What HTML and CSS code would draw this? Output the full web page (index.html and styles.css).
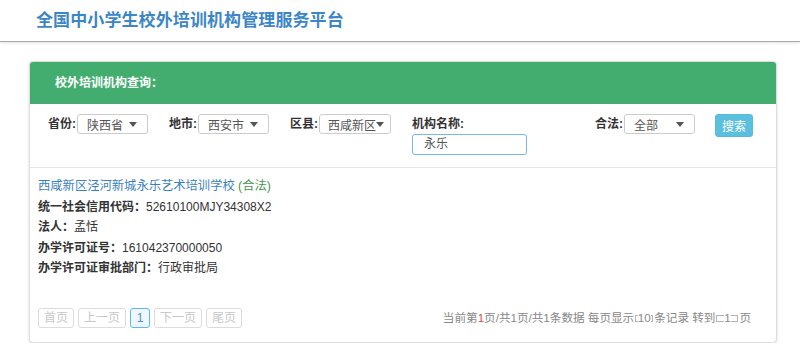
FILE: index.html
```html
<!DOCTYPE html>
<html lang="zh-CN">
<head>
<meta charset="utf-8">
<title>全国中小学生校外培训机构管理服务平台</title>
<link rel="stylesheet" href="styles.css">
</head>
<body>
<header class="topbar">
  <h1 class="site-title">全国中小学生校外培训机构管理服务平台</h1>
</header>
<main class="card">
  <div class="card-head">校外培训机构查询：</div>
  <div class="filters">
    <div class="field">
      <span class="flabel">省份:</span>
      <div class="sel"><span>陕西省</span><span class="caret"></span></div>
    </div>
    <div class="field">
      <span class="flabel">地市:</span>
      <div class="sel"><span>西安市</span><span class="caret"></span></div>
    </div>
    <div class="field">
      <span class="flabel">区县:</span>
      <div class="sel sel-tight"><span>西咸新区</span><span class="caret"></span></div>
    </div>
    <div class="field field-col">
      <span class="flabel">机构名称:</span>
      <div class="text-input">永乐</div>
    </div>
    <div class="field field-right">
      <span class="flabel">合法:</span>
      <div class="sel"><span>全部</span><span class="caret"></span></div>
    </div>
    <button class="btn-search" type="button">搜索</button>
  </div>
  <div class="result">
    <div class="result-line"><a class="org-link" href="#">西咸新区泾河新城永乐艺术培训学校</a> <span class="legal">(合法)</span></div>
    <div class="result-line"><b class="rlabel">统一社会信用代码：</b><span class="rval">52610100MJY34308X2</span></div>
    <div class="result-line"><b class="rlabel">法人：</b><span class="rval">孟恬</span></div>
    <div class="result-line"><b class="rlabel">办学许可证号：</b><span class="rval">161042370000050</span></div>
    <div class="result-line"><b class="rlabel">办学许可证审批部门：</b><span class="rval">行政审批局</span></div>
  </div>
  <div class="pager">
    <div class="pages">
      <span class="pbtn">首页</span>
      <span class="pbtn">上一页</span>
      <span class="pbtn pbtn-active">1</span>
      <span class="pbtn">下一页</span>
      <span class="pbtn">尾页</span>
    </div>
    <div class="pinfo">当前第<span class="cur">1</span>页/共1页/共1条数据 每页显示<span class="mini mini-a"><span class="mini-txt">10</span></span>条记录 转到<span class="mini mini-b"><span class="mini-txt">1</span></span>页</div>
  </div>
</main>
</body>
</html>
```

FILE: styles.css
```css
* { box-sizing: border-box; }
html, body { margin: 0; padding: 0; background: #fff; }
body {
  font-family: "Liberation Sans", "Noto Sans CJK SC", sans-serif;
  font-size: 12px;
  color: #333;
}
.topbar {
  height: 42px;
  border-bottom: 1px solid #a9a9a9;
  box-shadow: 0 1px 3px rgba(0,0,0,0.12);
  padding-left: 36px;
  display: flex;
  align-items: center;
}
.site-title {
  margin: 0;
  font-size: 17px;
  font-weight: bold;
  color: #3d86c6;
  line-height: 20px;
  letter-spacing: 0.1px;
}
.card {
  display: block;
  width: 748px;
  margin: 19px 0 0 29px;
  border: 1px solid #dedede;
  border-radius: 4px;
  box-shadow: 0 1px 3px rgba(0,0,0,0.15);
  overflow: hidden;
  background: #fff;
}
.card-head {
  height: 42px;
  background: #43ad6f;
  color: #fff;
  font-weight: bold;
  font-size: 12px;
  line-height: 42px;
  padding-left: 25px;
}
.filters {
  display: flex;
  align-items: flex-start;
  padding: 10px 23px 12px 18px;
  border-bottom: 1px solid #e6e6e6;
}
.field {
  display: flex;
  align-items: center;
  margin-right: 21px;
}
.flabel {
  width: 29px;
  flex: none;
  font-weight: bold;
  color: #333;
  line-height: 20px;
  font-size: 12px;
  white-space: nowrap;
}
.sel {
  width: 71px;
  height: 20px;
  border: 1px solid #ccc;
  border-radius: 3px;
  display: flex;
  align-items: center;
  justify-content: space-between;
  padding: 0 10px 0 9px;
  color: #555;
  font-size: 12px;
  background: #fff;
}
.sel-tight {
  width: 72px;
  justify-content: flex-start;
  padding: 0 0 0 8px;
}
.caret {
  width: 0;
  height: 0;
  border-left: 4px solid transparent;
  border-right: 4px solid transparent;
  border-top: 5px solid #555;
}
.field-col {
  flex-direction: column;
  align-items: flex-start;
  margin-right: 0;
}
.field-col .flabel { width: auto; }
.text-input {
  width: 115px;
  height: 21px;
  border: 1px solid #7ab6e6;
  border-radius: 3px;
  padding-left: 11px;
  line-height: 19px;
  color: #555;
  font-size: 12px;
}
.field-right { margin-left: auto; margin-right: 20px; }
.btn-search {
  width: 38px;
  height: 23px;
  padding: 0;
  border: 1px solid #55bcdc;
  border-radius: 3px;
  background: #5bc0de;
  color: #fff;
  font-family: inherit;
  font-size: 12px;
}
.result {
  padding: 8px 0 0 8px;
}
.result-line {
  line-height: 20.5px;
  font-size: 12px;
  color: #333;
}
.org-link {
  color: #3a7fbf;
  text-decoration: none;
  font-size: 12.3px;
}
.legal {
  color: #4a9350;
  font-size: 12.3px;
}
.rlabel { font-weight: bold; }
.rval { color: #333; }
.pager {
  display: flex;
  justify-content: space-between;
  align-items: center;
  padding: 0 25px 14px 8px;
  margin-top: 29px;
}
.pages { display: flex; gap: 4px; }
.pbtn {
  height: 20px;
  line-height: 18px;
  border: 1px solid #dcdcdc;
  border-radius: 3px;
  padding: 0 5px;
  color: #c8c8c8;
  font-size: 12px;
}
.pbtn-active {
  width: 20px;
  padding: 0;
  text-align: center;
  border-color: #5db6ec;
  background: #eef7ff;
  color: #5a8fc0;
}
.pinfo {
  font-size: 11.6px;
  color: #888;
  line-height: 20px;
  display: flex;
  align-items: center;
  white-space: pre;
}
.cur { color: #e4473c; }
.mini {
  position: relative;
  display: inline-flex;
  justify-content: center;
  align-items: center;
  height: 14px;
  margin: 0 1px;
}
.mini::before {
  content: "";
  position: absolute;
  left: 0;
  right: 0;
  top: 4px;
  bottom: 3px;
  border: 1px solid #b5b5b5;
}
.mini-txt {
  position: relative;
  background: #fff;
  line-height: 14px;
  padding: 0;
  color: #888;
}
.mini-a { width: 18px; }
.mini-b { width: 22px; }
```
